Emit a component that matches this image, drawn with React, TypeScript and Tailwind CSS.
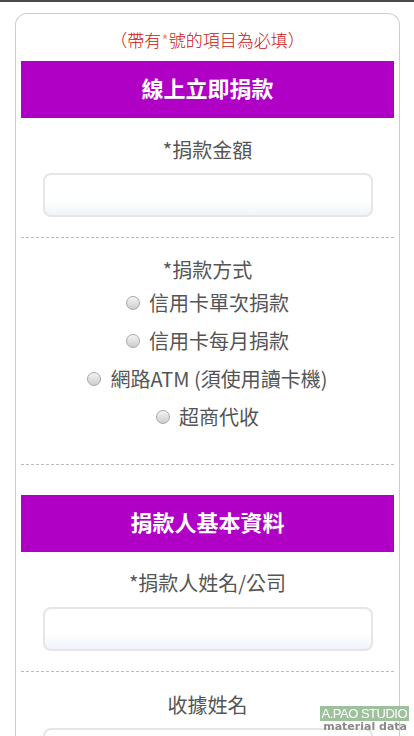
const CJK = "font-['Noto_Sans_CJK_TC','Liberation_Sans',sans-serif]";

function Header({ title }: { title: string }) {
  return (
    <div className="flex h-[57px] items-center justify-center bg-[#b100c6]">
      <h2 className="font-['Liberation_Serif','Noto_Sans_CJK_TC',serif] text-[22px] font-bold leading-none text-white">
        {title}
      </h2>
    </div>
  );
}

function Label({ text }: { text: string }) {
  return (
    <div className={`${CJK} text-center text-[20px] leading-[30px] text-[#555]`}>{text}</div>
  );
}

function TextInput() {
  return (
    <div className="mx-auto h-[44px] w-[330px] rounded-lg border-2 border-[#e6e6e6] bg-gradient-to-b from-white from-60% to-[#f0f5fa]" />
  );
}

function Radio({ label }: { label: string }) {
  return (
    <label className="flex h-[38px] items-center justify-center gap-[9px]">
      <span className="h-[14px] w-[14px] rounded-full border border-[#a8a8a8] bg-gradient-to-b from-[#f4f4f4] to-[#cdcdcd]" />
      <span className={`${CJK} text-[20px] leading-none text-[#555]`}>{label}</span>
    </label>
  );
}

const methods = ["信用卡單次捐款", "信用卡每月捐款", "網路ATM (須使用讀卡機)", "超商代收"];

export default function App() {
  return (
    <div className="relative min-h-[736px] border-t-2 border-[#4a4a4a] bg-white">
      <div className="ml-[15px] mt-[11px] w-[385px] rounded-t-[12px] border border-b-0 border-[#cccccc] px-[5px] pt-[14px]">
        <p className={`${CJK} mb-[9px] text-center text-[17px] font-light leading-[24px] text-[#cc1111]`}>
          （帶有<span className="text-[#e08070]">*</span>號的項目為必填）
        </p>

        <Header title="線上立即捐款" />

        <section className="border-b border-dashed border-[#bbbbbb] pb-[20px] pt-[17px]">
          <Label text="*捐款金額" />
          <div className="mt-[8px]">
            <TextInput />
          </div>
        </section>

        <section className="border-b border-dashed border-[#bbbbbb] pb-[28px] pt-[17px]">
          <Label text="*捐款方式" />
          <div className="-mt-px flex flex-col">
            {methods.map((m) => (
              <Radio key={m} label={m} />
            ))}
          </div>
        </section>

        <div className="mt-[30px]">
          <Header title="捐款人基本資料" />
        </div>

        <section className="border-b border-dashed border-[#bbbbbb] pb-[20px] pt-[16px]">
          <Label text="*捐款人姓名/公司" />
          <div className="mt-[9px]">
            <TextInput />
          </div>
        </section>

        <section className="pb-[20px] pt-[18px]">
          <Label text="收據姓名" />
          <div className="mt-[8px]">
            <TextInput />
          </div>
        </section>
      </div>

      {/* watermark */}
      <div className="fixed bottom-[3px] right-[5px] flex flex-col items-end">
        <div className="bg-[#9fc09c] px-[2px] font-['Liberation_Sans',sans-serif] text-[13px] leading-[15px] tracking-[-0.5px] text-white">
          A.PAO STUDIO
        </div>
        <div className="pr-[2px] font-['DejaVu_Sans',sans-serif] text-[11px] font-bold leading-[12px] text-[#8a8a8a]">
          material data
        </div>
      </div>
    </div>
  );
}
